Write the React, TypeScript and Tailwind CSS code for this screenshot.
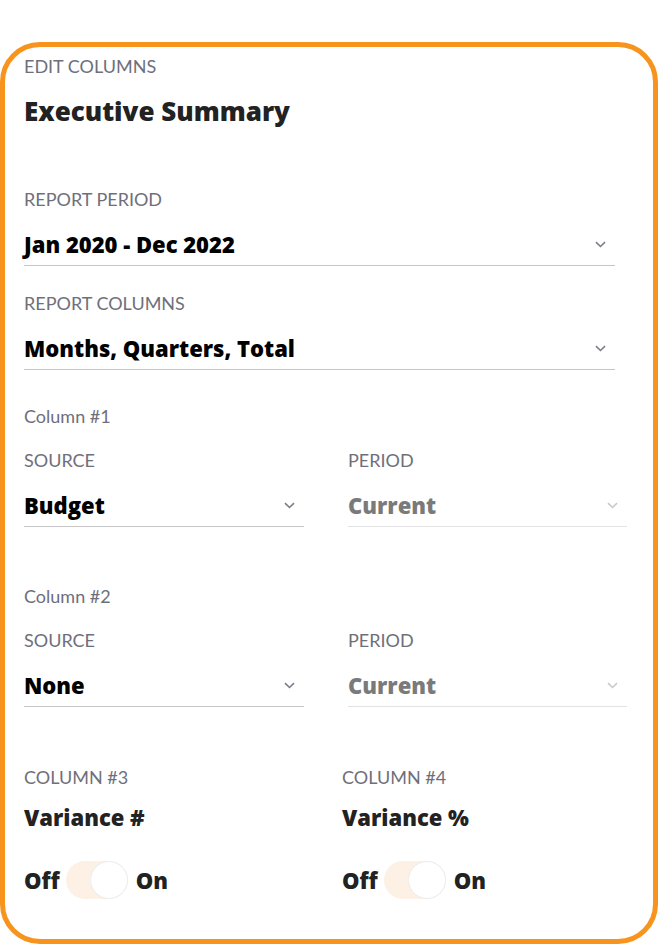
import React, { useState } from 'react'

/** ================================|| Edit Columns ||=================================== **/

const Chevron = ({ disabled }: { disabled?: boolean }) => (
    <svg width="11" height="7" viewBox="0 0 11 7" fill="none" className='shrink-0'>
        <path d="M1 1.2 L5.5 5.5 L10 1.2" stroke={disabled ? '#c9c9cf' : '#7c7c88'} strokeWidth="1.6" />
    </svg>
)

interface SelectProps {
    value: string
    disabled?: boolean
    className?: string
}

const SelectField = ({ value, disabled, className }: SelectProps) => (
    <div className={`mt-[20px] flex items-center justify-between pb-[7px] pr-[9px] border-b ${disabled ? 'border-[#e3e3e6]' : 'border-[#c6c6c9]'} ${className ?? ''}`}>
        <span className={`font-['Open_Sans',sans-serif] text-[22px] leading-[28px] font-extrabold ${disabled ? 'text-[#7a7a7a]' : 'text-black'}`}>{value}</span>
        <Chevron disabled={disabled} />
    </div>
)

const Label = ({ children, className }: { children: React.ReactNode, className?: string }) => (
    <div className={`text-[18px] leading-[22px] text-[#6f6f7b] ${className ?? ''}`}>{children}</div>
)

const Toggle = ({ on, onClick }: { on: boolean, onClick: () => void }) => (
    <button onClick={onClick} className='flex h-[38px] w-[62px] items-center rounded-full bg-[#fdf0e5]'>
        <span className={`h-[38px] w-[38px] rounded-full border border-[#ececee] bg-white ${on ? 'ml-auto' : ''}`} />
    </button>
)

const ColumnBlock = ({ title, source }: { title: string, source: string }) => (
    <div>
        <Label>{title}</Label>
        <div className='flex mt-[22px]'>
            <div className='w-[280px]'>
                <Label>SOURCE</Label>
                <SelectField value={source} />
            </div>
            <div className='w-[279px] ml-[44px]'>
                <Label>PERIOD</Label>
                <SelectField value="Current" disabled />
            </div>
        </div>
    </div>
)

const VarianceBlock = ({ title, name }: { title: string, name: string }) => {
    const [on, setOn] = useState(true)
    return (
        <div className="font-['Open_Sans',sans-serif] text-[22px] leading-[28px] font-extrabold text-[#222]">
            <Label className="font-['Lato',sans-serif] font-normal">{title}</Label>
            <div className='mt-[15px]'>{name}</div>
            <div className='mt-[30px] flex items-center'>
                <span>Off</span>
                <div className='ml-[6px] mr-[8px]'>
                    <Toggle on={on} onClick={() => setOn(!on)} />
                </div>
                <span>On</span>
            </div>
        </div>
    )
}

export default function App() {
    return (
        <div className="min-h-[946px] bg-white pt-[42px] font-['Lato',sans-serif]">
            <div className='h-[902px] rounded-[40px] border-[5px] border-[#f7941d] pl-[19px] pt-[8px]'>
                <Label>EDIT COLUMNS</Label>
                <h1 className="mt-[18px] font-['Open_Sans',sans-serif] text-[26px] leading-[32px] font-extrabold text-[#222]">Executive Summary</h1>

                <Label className='mt-[61px]'>REPORT PERIOD</Label>
                <SelectField value="Jan 2020 - Dec 2022" className='w-[591px]' />

                <Label className='mt-[26px]'>REPORT COLUMNS</Label>
                <SelectField value="Months, Quarters, Total" className='w-[591px]' />

                <div className='mt-[35px]'>
                    <ColumnBlock title="Column #1" source="Budget" />
                </div>
                <div className='mt-[58px]'>
                    <ColumnBlock title="Column #2" source="None" />
                </div>

                <div className='mt-[59px] flex'>
                    <div className='w-[318px]'>
                        <VarianceBlock title="COLUMN #3" name="Variance #" />
                    </div>
                    <VarianceBlock title="COLUMN #4" name="Variance %" />
                </div>
            </div>
        </div>
    )
}
